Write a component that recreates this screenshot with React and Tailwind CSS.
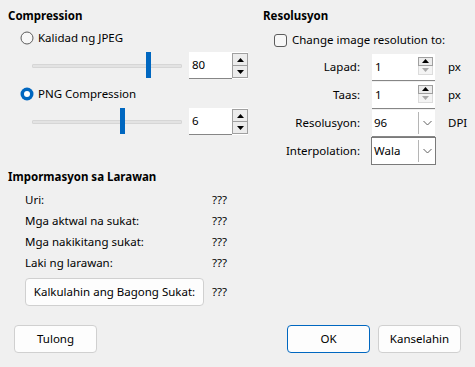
import React from 'react';

const font = { fontFamily: '"Noto Sans", "Open Sans", sans-serif' };

function Radio({ checked }) {
  return (
    <svg width="14" height="14" viewBox="0 0 14 14" className="shrink-0">
      {checked ? (
        <>
          <circle cx="7" cy="7" r="6.5" fill="#0067c0" />
          <circle cx="7" cy="7" r="3" fill="#ffffff" />
        </>
      ) : (
        <circle cx="7" cy="7" r="6" fill="#f7f7f7" stroke="#5c5c5c" strokeWidth="1" />
      )}
    </svg>
  );
}

function Slider({ pos }) {
  return (
    <div className="relative w-[150px] h-[27px] flex items-center">
      <div className="w-full h-[4px] bg-[#e3e3e3] border border-[#d6d6d6] rounded-[1px]" />
      <div
        className="absolute top-0 w-[5px] h-[26px] bg-[#0067c0]"
        style={{ left: pos }}
      />
    </div>
  );
}

function Arrow({ up, color }) {
  return (
    <svg width="7" height="4" viewBox="0 0 7 4">
      {up ? <path d="M0 4 L3.5 0 L7 4 Z" fill={color} /> : <path d="M0 0 L3.5 4 L7 0 Z" fill={color} />}
    </svg>
  );
}

function SpinBig({ value }) {
  return (
    <div className="flex h-[27px]">
      <div className="w-[43px] h-full bg-white border-b border-[#868686] flex items-center pl-[3px]">
        {value}
      </div>
      <div className="flex flex-col w-[16px] h-full bg-white py-[1px]">
        <div className="flex-1 flex items-center justify-center border border-[#a0a0a0] bg-[#ececec]">
          <Arrow up color="#000" />
        </div>
        <div className="flex-1 flex items-center justify-center border border-t-0 border-[#a0a0a0] bg-[#ececec]">
          <Arrow color="#000" />
        </div>
      </div>
    </div>
  );
}

function SpinSmall({ value }) {
  return (
    <div className="flex h-[27px] w-[63px] bg-white border-b border-[#868686]">
      <div className="w-[46px] h-full flex items-center pl-[3px]">{value}</div>
      <div className="flex flex-col w-[15px] pt-[3px]">
        <div className="h-[9px] flex items-center justify-center border border-[#a0a0a0] bg-[#ececec]">
          <Arrow up color="#000" />
        </div>
        <div className="h-[9px] flex items-center justify-center border border-t-0 border-[#dcdcdc] bg-[#f4f4f4]">
          <Arrow color="#a8a8a8" />
        </div>
      </div>
    </div>
  );
}

function Chevron() {
  return (
    <svg width="9" height="6" viewBox="0 0 9 6">
      <path d="M0.5 1 L4.5 5 L8.5 1" fill="none" stroke="#606060" strokeWidth="1" />
    </svg>
  );
}

function Combo({ value, boxed }) {
  return (
    <div
      className={
        boxed
          ? 'flex h-[28px] w-[65px] -ml-[1px] bg-white border border-[#7a7a7a]'
          : 'flex h-[27px] w-[63px] bg-white border-b border-[#868686]'
      }
    >
      <div className="flex-1 flex items-center pl-[2px]">{value}</div>
      <div className="w-[17px] my-[2px] border-l border-[#b5b5b5] flex items-center justify-center">
        <Chevron />
      </div>
    </div>
  );
}

function Button({ children, className = '', primary }) {
  return (
    <button
      className={
        'h-[28px] rounded-[4px] bg-[#fdfdfd] text-black flex items-center justify-center border ' +
        (primary ? 'border-[#0067c0] ' : 'border-[#d0d0d0] ') +
        className
      }
    >
      {children}
    </button>
  );
}

function FieldRow({ label, children, unit }) {
  return (
    <div className="flex items-center h-[28px]">
      <span className="w-[109px] text-right pr-[12px]">{label}</span>
      <div className="w-[76px]">{children}</div>
      <span>{unit}</span>
    </div>
  );
}

export default function App() {
  const info = ['Uri:', 'Mga aktwal na sukat:', 'Mga nakikitang sukat:', 'Laki ng larawan:'];

  return (
    <div className="w-[475px] h-[367px] bg-[#f0f0f0] text-[11.5px] text-black flex flex-col leading-[16px]" style={font}>
      <div className="flex">
        {/* Compression */}
        <div className="w-[255px] pl-[8px] pt-[8px]">
          <div className="font-bold">Compression</div>
          <div className="flex items-center gap-[4px] pl-[12px] mt-[6px] h-[16px]">
            <Radio />
            <span>Kalidad ng JPEG</span>
          </div>
          <div className="flex items-center pl-[24px] mt-[6px]">
            <Slider pos={114} />
            <div className="ml-[7px]">
              <SpinBig value="80" />
            </div>
          </div>
          <div className="flex items-center gap-[4px] pl-[12px] mt-[7px] h-[16px]">
            <Radio checked />
            <span>PNG Compression</span>
          </div>
          <div className="flex items-center pl-[24px] mt-[6px]">
            <Slider pos={88} />
            <div className="ml-[7px]">
              <SpinBig value="6" />
            </div>
          </div>
        </div>

        {/* Resolusyon */}
        <div className="flex-1 pl-[8px] pt-[8px]">
          <div className="font-bold">Resolusyon</div>
          <div className="flex items-center gap-[5px] pl-[11px] mt-[8px] h-[16px]">
            <div className="w-[13px] h-[13px] rounded-[3px] border border-[#5c5c5c] bg-[#f7f7f7]" />
            <span>Change image resolution to:</span>
          </div>
          <div className="mt-[5px]">
            <FieldRow label="Lapad:" unit="px">
              <SpinSmall value="1" />
            </FieldRow>
            <FieldRow label="Taas:" unit="px">
              <SpinSmall value="1" />
            </FieldRow>
            <FieldRow label="Resolusyon:" unit="DPI">
              <Combo value="96" />
            </FieldRow>
            <FieldRow label="Interpolation:">
              <Combo value="Wala" boxed />
            </FieldRow>
          </div>
        </div>
      </div>

      {/* Info */}
      <div className="pl-[8px] mt-[4px]">
        <div className="font-bold">Impormasyon sa Larawan</div>
        <div className="mt-[4px] pl-[17px] w-[219px]">
          {info.map((t) => (
            <div key={t} className="flex justify-between h-[21px] items-center">
              <span>{t}</span>
              <span>???</span>
            </div>
          ))}
          <div className="flex items-center justify-between mt-[5px]">
            <Button className="w-[179px]">Kalkulahin ang Bagong Sukat:</Button>
            <span>???</span>
          </div>
        </div>
      </div>

      {/* Bottom buttons */}
      <div className="flex items-center pl-[14px] pr-[14px] mt-[19px]">
        <Button className="w-[83px]">Tulong</Button>
        <div className="flex-1" />
        <Button primary className="w-[83px]">OK</Button>
        <Button className="w-[83px] ml-[8px]">Kanselahin</Button>
      </div>
    </div>
  );
}
